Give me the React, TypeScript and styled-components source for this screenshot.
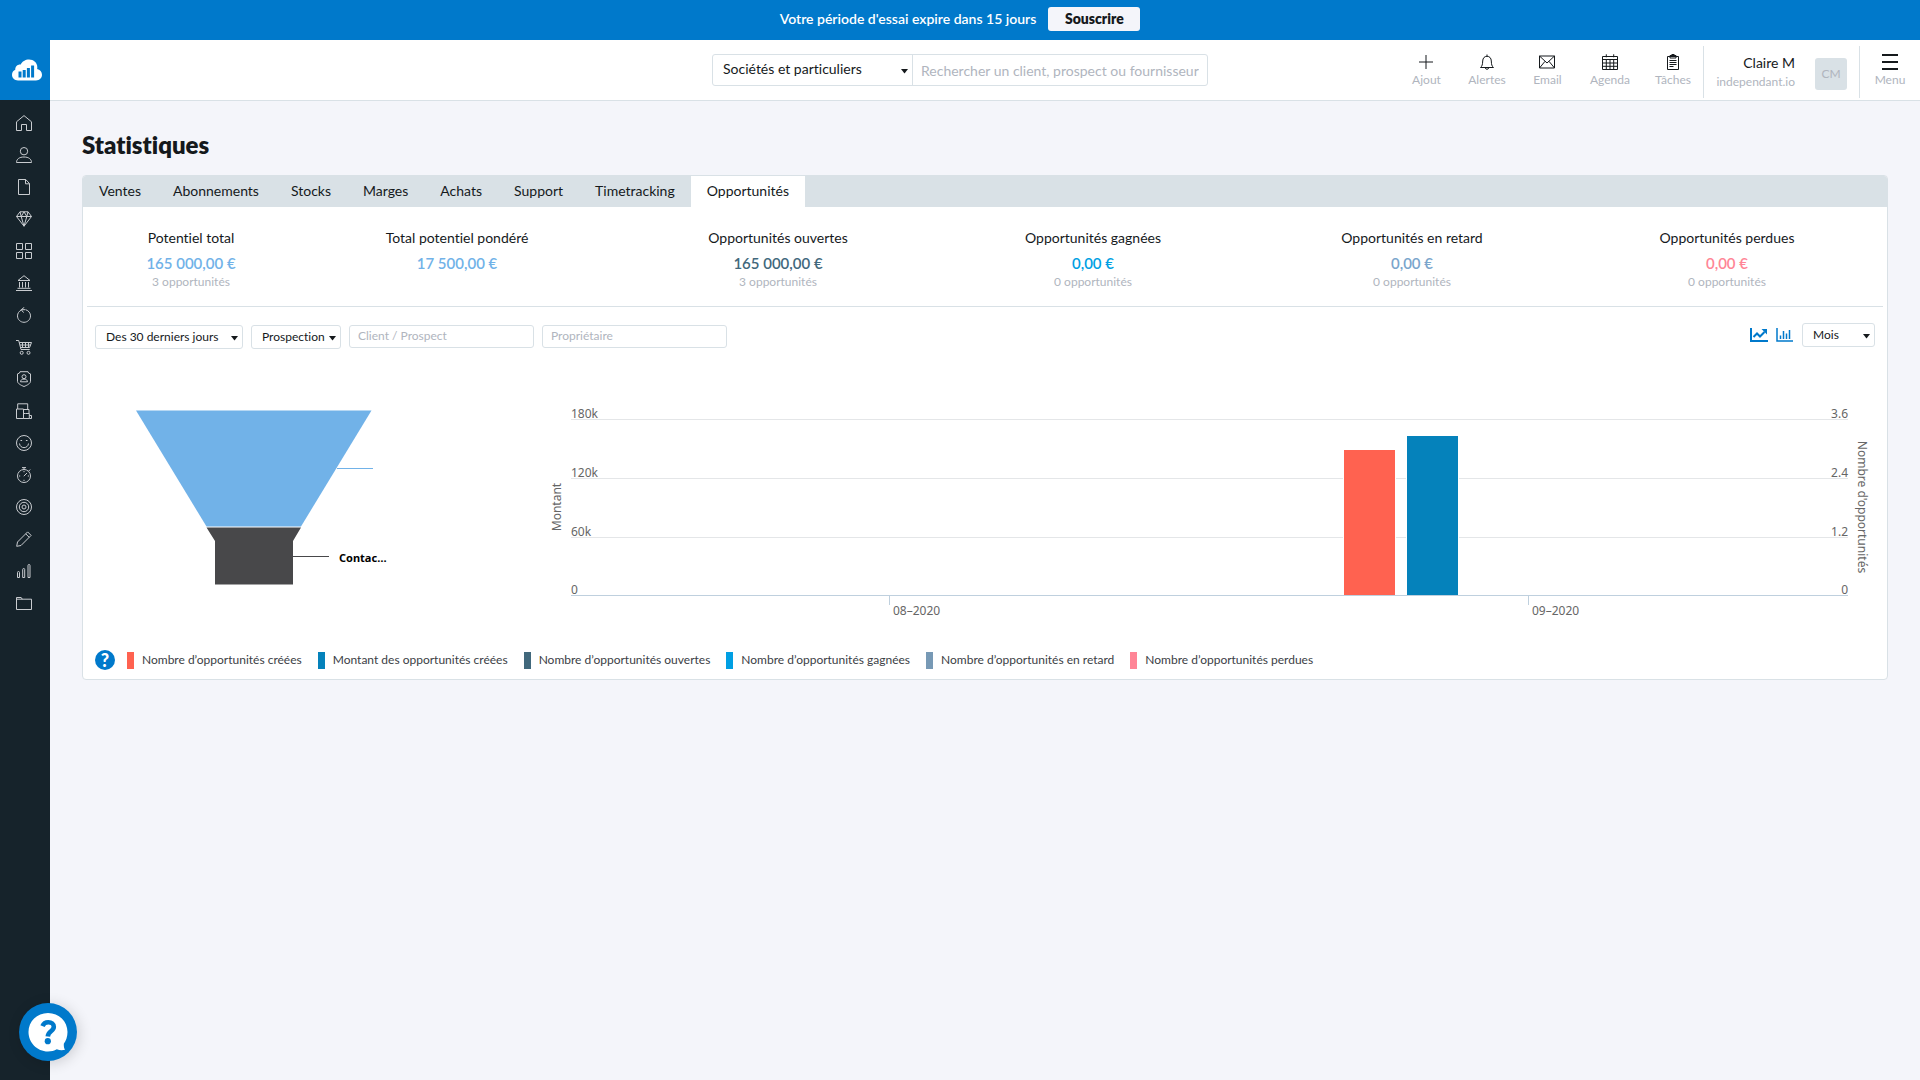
import React from 'react';
import styled, { createGlobalStyle } from 'styled-components';

const color = {
  brand: '#0079cb',
  dark: '#16232b',
  ink: '#15191c',
  line: '#d9e1e6',
  page: '#f4f5fa',
  muted: '#b0b5be',
};

const GlobalStyle = createGlobalStyle`
  * { box-sizing: border-box; }
  body {
    margin: 0;
    background: ${color.page};
    color: ${color.ink};
    font-family: Lato, "Open Sans", sans-serif;
    font-size: 14px;
    font-variant-ligatures: none;
    line-height: 20px;
  }
  button, input, select { font: inherit; color: inherit; margin: 0; }
  a { color: inherit; text-decoration: none; }
`;

const Page = styled.div`
  display: flex;
  flex-direction: column;
  min-height: 100vh;
`;

const TrialBanner = styled.div`
  display: flex;
  align-items: center;
  justify-content: center;
  gap: 12px;
  height: 40px;
  padding-bottom: 2px;
  background: ${color.brand};
  color: #fff;
  font-weight: 600;
`;

const SubscribeButton = styled.button`
  height: 24px;
  width: 92px;
  padding: 0;
  border: 0;
  border-radius: 3px;
  background: ${color.page};
  color: ${color.ink};
  font-weight: 800;
`;

const Body = styled.div`
  display: flex;
  flex: 1;
`;

const Sidebar = styled.nav`
  display: flex;
  flex-direction: column;
  flex: none;
  width: 50px;
  background: ${color.dark};
  color: #c9ccd0;
`;

const LogoLink = styled.a`
  display: flex;
  align-items: center;
  justify-content: center;
  height: 60px;
  padding-left: 4px;
  background: ${color.brand};
`;

const NavList = styled.ul`
  list-style: none;
  margin: 0;
  padding: 7px 0;
`;

const NavLink = styled.a`
  display: flex;
  align-items: center;
  height: 32px;
  padding-left: 16px;
`;

const Icon = styled.svg`
  display: block;
  width: 16px;
  height: 16px;
  fill: none;
  stroke: currentColor;
  stroke-width: 1;
`;

const Main = styled.div`
  flex: 1;
  min-width: 0;
`;

const Header = styled.header`
  display: grid;
  grid-template-columns: 1fr 496px 1fr;
  align-items: center;
  height: 61px;
  background: #fff;
  border-bottom: 1px solid ${color.line};
`;

const SearchGroup = styled.form`
  grid-column: 2;
  display: flex;
  height: 32px;
  margin-left: -25px;
  margin-right: 25px;
  border: 1px solid ${color.line};
  border-radius: 3px;
`;

const SelectWrap = styled.div<{ $width: number }>`
  position: relative;
  flex: none;
  width: ${(p) => p.$width}px;
`;

const Caret = styled.svg<{ $right: number }>`
  position: absolute;
  right: ${(p) => p.$right}px;
  top: calc(50% - 1px);
  width: 7px;
  height: 5px;
  fill: ${color.ink};
  pointer-events: none;
`;

const ScopeSelect = styled.select`
  appearance: none;
  width: 100%;
  height: 30px;
  padding: 0 10px 2px;
  border: 0;
  border-right: 1px solid ${color.line};
  background: transparent;
`;

const SearchInput = styled.input`
  flex: 1;
  min-width: 0;
  padding: 2px 8px 0;
  border: 0;
  background: transparent;
  &::placeholder { color: ${color.muted}; opacity: 1; }
`;

const Tools = styled.div`
  grid-column: 3;
  justify-self: end;
  display: flex;
  align-items: center;
  height: 52px;
  margin-top: 4px;
`;

const ToolLink = styled.a<{ $width: number }>`
  display: flex;
  flex-direction: column;
  align-items: center;
  gap: 2px;
  width: ${(p) => p.$width}px;
  padding-bottom: 2px;
  color: ${color.ink};
  font-size: 12px;
  line-height: 16px;
  span { color: ${color.muted}; }
`;

const Account = styled.a`
  display: flex;
  align-items: center;
  gap: 20px;
  height: 52px;
  padding: 0 12px;
  border: solid ${color.line};
  border-width: 0 1px;
`;

const AccountName = styled.span`
  display: flex;
  flex-direction: column;
  align-items: flex-end;
  line-height: 19px;
  small { font-size: 12px; color: ${color.muted}; }
`;

const Avatar = styled.span`
  display: flex;
  align-items: center;
  justify-content: center;
  width: 32px;
  height: 32px;
  margin-top: 4px;
  border-radius: 3px;
  background: ${color.line};
  color: ${color.muted};
  font-size: 12px;
`;

const Content = styled.main`
  padding: 31px 32px;
`;

const Title = styled.h1`
  margin: 0 0 17px;
  font-size: 24px;
  line-height: 26px;
  font-weight: 800;
`;

const Card = styled.section`
  border: 1px solid ${color.line};
  border-radius: 4px;
  background: #fff;
  overflow: hidden;
`;

const Tabs = styled.nav`
  display: flex;
  height: 31px;
  background: ${color.line};
`;

const Tab = styled.a<{ $active?: boolean }>`
  display: flex;
  align-items: center;
  padding: 0 16px 2px;
  background: ${(p) => (p.$active ? '#fff' : 'transparent')};
`;

const Totals = styled.div`
  display: grid;
  grid-template-columns: 208fr 324fr 318fr 312fr 326fr 304fr;
  margin: 0 4px;
  padding: 21px 4px 14px 0;
  min-height: 100px;
  border-bottom: 1px solid ${color.line};
  text-align: center;
`;

const TotalLabel = styled.div`
  line-height: 20px;
`;

const TotalValue = styled.div<{ $color: string }>`
  margin-top: 3px;
  font-size: 15px;
  font-weight: 600;
  line-height: 24px;
  color: ${(p) => p.$color};
`;

const TotalCount = styled.div`
  font-size: 12px;
  line-height: 14px;
  color: ${color.muted};
`;

const Filters = styled.div`
  display: flex;
  align-items: flex-start;
  justify-content: space-between;
  padding: 16px 12px 0;
  font-size: 12px;
`;

const FilterGroup = styled.div`
  display: flex;
  gap: 8px;
  padding-top: 2px;
`;

const ViewGroup = styled.div`
  display: flex;
  align-items: center;
  gap: 8px;
`;

const FilterSelect = styled.select`
  appearance: none;
  display: block;
  width: 100%;
  height: 24px;
  padding: 0 10px;
  border: 1px solid ${color.line};
  border-radius: 3px;
  background: #fff;
`;

const FilterInput = styled.input`
  width: 185px;
  height: 23px;
  padding: 0 8px 2px;
  border: 1px solid ${color.line};
  border-radius: 3px;
  &::placeholder { color: ${color.muted}; opacity: 1; }
`;

const ModeButton = styled.button`
  display: block;
  padding: 0;
  border: 0;
  background: none;
  color: ${color.brand};
  svg { display: block; }
`;

const Charts = styled.div`
  display: grid;
  grid-template-columns: 440px 1fr;
  padding: 35px 12px 0;
`;

const ChartSvg = styled.svg`
  display: block;
  width: 100%;
  height: auto;
  text { font-family: "Noto Sans", sans-serif; font-size: 12px; fill: #666; }
`;

const SliceLabel = styled.text`
  && { font-size: 11px; font-weight: 700; fill: #000; }
`;

const Legend = styled.div`
  display: flex;
  align-items: center;
  gap: 12px;
  padding: 26px 12px 9px;
`;

const LegendList = styled.ul`
  display: flex;
  gap: 16px;
  margin: 0;
  padding: 0;
  list-style: none;
`;

const LegendItem = styled.li<{ $color: string }>`
  display: flex;
  align-items: center;
  gap: 8px;
  font-size: 12px;
  line-height: 20px;
  color: #3b4045;
  &::before {
    content: "";
    width: 7px;
    height: 17px;
    background: ${(p) => p.$color};
  }
`;

const HelpBadge = styled.span`
  display: flex;
  align-items: center;
  justify-content: center;
  width: 20px;
  height: 20px;
  border-radius: 50%;
  background: ${color.brand};
  color: #fff;
  font-size: 18px;
  font-weight: 900;
`;

const ChatButton = styled.button`
  position: fixed;
  left: 19px;
  bottom: 19px;
  width: 58px;
  height: 58px;
  padding: 0;
  border: 0;
  border-radius: 50%;
  background: ${color.brand};
  box-shadow: 2px 2px 14px rgba(0, 0, 0, 0.16);
  svg { display: block; }
`;

const navItems: [string, React.ReactNode][] = [
  ['Accueil', <path d="M.5 6.8v8.7h5v-6h5v6h5V6.8L8 .6z" />],
  ['Clients', <><circle cx="8" cy="4.2" r="3.7" /><path d="M.5 15.5c0-3.4 2.8-5.5 7.5-5.5s7.5 2.1 7.5 5.5z" /></>],
  ['Documents', <path d="M2.5.5h7.2l3.8 4v11h-11zM9.5.5v4.3h4" />],
  ['Catalogue', <path d="M4 .8h8l3.5 4.7L8 15.2.5 5.5zM.5 5.5h15M4 .8l1.2 4.7L8 15.2l2.8-9.7L12 .8M5.2 5.5 8 .8l2.8 4.7" />],
  ['Modules', <path d="M.5.5h6v6h-6zM9.5.5h6v6h-6zM.5 9.5h6v6h-6zM9.5 9.5h6v6h-6z" />],
  ['Banque', <path d="M2 5.5h12L8 .7zM3.5 7v5.5M6.5 7v5.5M9.5 7v5.5M12.5 7v5.5M1.5 13.3h13M0 15.5h16" />],
  ['Abonnements', <path d="M5.200 3.200C3 4.200 1.500 6.300 1.500 8.900c0 3.500 2.900 6.400 6.500 6.400s6.500-2.900 6.500-6.400c0-2.900-1.900-5.200-4.600-6.100M9.500 2.700H5.200M8.300.3 5.200 2.700l2.400 2.900" />],
  ['Achats', <><path d="M0 1.500h2.700l2.300 9h8.700M3.300 3.500h12.200l-1.900 5H4.600M4 6h10.700M6.500 3.500v5M9.500 3.500v5M12.500 3.500v5" /><circle cx="5.700" cy="13.800" r="1.500" /><circle cx="12.500" cy="13.800" r="1.500" /></>],
  ['Comptabilité', <><path d="m4 .7h8l.6 1.400 1.900.8v7.400c0 2.200-3.500 4-6.500 5.200-3-1.200-6.500-3-6.500-5.200V2.900l1.900-.8z" /><circle cx="8" cy="5.700" r="2" /><path d="M4.500 10.800c.3-1.900 1.300-2.700 3.500-2.700s3.200.8 3.500 2.700z" /></>],
  ['Stocks', <path d="M.5 6h7v9.500h-7zM1.700 6V.8h10v5.700M7.500 6.500h5.500v4M9.500 10.500h3.800v5H7.500v-5zM13.300 12.500h2.200v3h-2.200" />],
  ['Satisfaction', <><circle cx="8" cy="8" r="7.500" /><path d="M3.500 8.500c.4 5.500 8.600 5.500 9 0M4.500 5.500h1.600M9.900 5.500h1.600" /></>],
  ['Temps', <><circle cx="8" cy="9" r="6.500" /><path d="M6 .6h4M8 .6v2M12.600 4.200l1.600-1.700M7.800 9.200 11 6M8 4v1.200M8 12.800V14M3 9h1.200M11.800 9H13" /></>],
  ['Objectifs', <><circle cx="8" cy="8" r="7.500" /><circle cx="8" cy="8" r="4.700" /><circle cx="8" cy="8" r="2" /></>],
  ['Édition', <path d="M.7 15.300 1.500 11 11.600.9l3.500 3.500L5 14.500zM9.700 2.800l3.500 3.500" />],
  ['Statistiques', <path d="M1.500 9.500q0-1 1-1t1 1v5h-2zM6.700 6.500q0-1 1-1t1 1v8h-2zM12 2.500q0-1 1-1t1 1v12h-2z" />],
  ['Fichiers', <path d="M.5 14.500v-12h4.700l1 1.700h9.300v10.300zM.5 4.200h6" />],
];

const tools: [string, number, React.ReactNode][] = [
  ['Ajout', 60, <path d="M8 1v14M1 8h14" />],
  ['Alertes', 61, <path d="M1.500 13.500c1.800-1.500 2-3 2.200-6.500.1-3 1.800-4.700 4.300-4.700S12.200 4 12.300 7c.2 3.500.4 5 2.200 6.500zM8 2.300V.5M6.300 14c.4 1.700 3 1.700 3.400 0" />],
  ['Email', 60, <path d="M.5 2h15v12h-15zM.5 2 8 9l7.500-7M.5 14l5.500-6.700M15.500 14 10 7.300" />],
  ['Agenda', 65, <path d="M.5 2.500h15v13H.5zM.5 5.500h15M.5 9h15M.5 12.300h15M4.300 5.500v10M8 5.500v10M11.700 5.500v10M4.300.3v3M11.700.3v3" />],
  ['Tâches', 61, <path d="M2.500 2.500h11v13h-11zM5 1.500h6v2.500H5zM6.500.5h3M4.500 6.500h7M4.500 8.500h7M4.500 10.500h7M4.500 12.500h4" />],
];

const tabs = ['Ventes', 'Abonnements', 'Stocks', 'Marges', 'Achats', 'Support', 'Timetracking', 'Opportunités'];

const totals = [
  { label: 'Potentiel total', value: '165 000,00 €', count: '3 opportunités', color: '#71b2e8' },
  { label: 'Total potentiel pondéré', value: '17 500,00 €', count: '', color: '#71b2e8' },
  { label: 'Opportunités ouvertes', value: '165 000,00 €', count: '3 opportunités', color: '#41687c' },
  { label: 'Opportunités gagnées', value: '0,00 €', count: '0 opportunités', color: '#009fe3' },
  { label: 'Opportunités en retard', value: '0,00 €', count: '0 opportunités', color: '#7aa5cc' },
  { label: 'Opportunités perdues', value: '0,00 €', count: '0 opportunités', color: '#ff8596' },
];

const legend = [
  ['Nombre d’opportunités créées', '#ff6250'],
  ['Montant des opportunités créées', '#0582bb'],
  ['Nombre d’opportunités ouvertes', '#41687c'],
  ['Nombre d’opportunités gagnées', '#009fe3'],
  ['Nombre d’opportunités en retard', '#7799b5'],
  ['Nombre d’opportunités perdues', '#ff8596'],
];

function CaretDown({ right }: { right: number }) {
  return <Caret $right={right} viewBox="0 0 7 5" aria-hidden="true"><path d="M0 0h7L3.500 4.500z" /></Caret>;
}

function Funnel() {
  return (
    <ChartSvg viewBox="0 0 440 240" role="img" aria-label="Entonnoir de prospection">
      <path d="M41 26.500H276.500L206 142.500H111.500z" fill="#71b2e8" />
      <path d="M111.500 143.500H206l-8 13.500v43.500h-78V157z" fill="#48484a" />
      <path d="M242 84.500h36" stroke="#71b2e8" />
      <path d="M198 172.500h36" stroke="#48484a" />
      <SliceLabel x="244" y="178">Contac…</SliceLabel>
    </ChartSvg>
  );
}

const gridRows = [
  { y: 35, left: '180k', right: '3.6' },
  { y: 94, left: '120k', right: '2.4' },
  { y: 153, left: '60k', right: '1.2' },
  { y: 211, left: '0', right: '0' },
];

function Bars() {
  return (
    <ChartSvg viewBox="0 0 1340 240" role="img" aria-label="Opportunités par mois">
      {gridRows.slice(0, 3).map((r) => (
        <path key={r.y} d={`M36 ${r.y + 0.5}H1313`} stroke="#e4e6e8" />
      ))}
      <rect x="808" y="65" width="53" height="147" fill="#fff" />
      <rect x="871" y="51" width="53" height="161" fill="#fff" />
      <rect x="809" y="66" width="51" height="146" fill="#ff6250" />
      <rect x="872" y="52" width="51" height="160" fill="#0582bb" />
      <path d="M36 211.500H1313M354.500 212v9M993.500 212v9" stroke="#bfd0de" />
      {gridRows.map((r) => (
        <React.Fragment key={r.y}>
          <text x="36" y={r.y - 1}>{r.left}</text>
          <text x="1313" y={r.y - 1} textAnchor="end">{r.right}</text>
        </React.Fragment>
      ))}
      <text x="358" y="231">08–2020</text>
      <text x="997" y="231">09–2020</text>
      <text transform="translate(26 123) rotate(-90)" textAnchor="middle">Montant</text>
      <text transform="translate(1323 123) rotate(90)" textAnchor="middle">Nombre d'opportunités</text>
    </ChartSvg>
  );
}

export default function App() {
  return (
    <Page>
      <GlobalStyle />
      <TrialBanner>
        <span>Votre période d'essai expire dans 15 jours</span>
        <SubscribeButton type="button">Souscrire</SubscribeButton>
      </TrialBanner>
      <Body>
        <Sidebar aria-label="Navigation principale">
          <LogoLink href="#" aria-label="Tableau de bord">
            <svg width="30" height="22" viewBox="0 0 30 22">
              <path d="M6 21.500C2.500 21.500 0 19 0 15.800c0-2.500 1.500-4.300 3.300-5-.3-3.300 2.300-5.600 5.400-5.300C10 2.500 13.500.5 17 .5c4.700 0 8.300 3.300 8.300 7.700 0 .7 0 1.300-.2 1.900 2.900.6 4.900 2.900 4.900 5.700 0 3.200-2.500 5.700-6 5.700z" fill="#fff" />
              <path d="M6.500 12.500h3V18.500h-3zM10.700 11h3v7.500h-3zM14.900 9h3v9.500h-3zM19.100 6.500h3v12h-3z" fill={color.brand} />
            </svg>
          </LogoLink>
          <NavList>
            {navItems.map(([name, shape]) => (
              <li key={name}>
                <NavLink href="#" aria-label={name}><Icon viewBox="0 0 16 16">{shape}</Icon></NavLink>
              </li>
            ))}
          </NavList>
        </Sidebar>
        <Main>
          <Header>
            <SearchGroup onSubmit={(e) => e.preventDefault()}>
              <SelectWrap $width={200}>
                <ScopeSelect aria-label="Type de client"><option>Sociétés et particuliers</option></ScopeSelect>
                <CaretDown right={5} />
              </SelectWrap>
              <SearchInput aria-label="Recherche" placeholder="Rechercher un client, prospect ou fournisseur" />
            </SearchGroup>
            <Tools>
              {tools.map(([name, width, shape]) => (
                <ToolLink key={name} href="#" $width={width}>
                  <Icon viewBox="0 0 16 16">{shape}</Icon>
                  <span>{name}</span>
                </ToolLink>
              ))}
              <Account href="#">
                <AccountName>Claire M<small>independant.io</small></AccountName>
                <Avatar>CM</Avatar>
              </Account>
              <ToolLink href="#" $width={60}>
                <Icon viewBox="0 0 16 16"><path d="M0 1h16M0 8h16M0 15h16" strokeWidth="2" /></Icon>
                <span>Menu</span>
              </ToolLink>
            </Tools>
          </Header>
          <Content>
            <Title>Statistiques</Title>
            <Card>
              <Tabs aria-label="Statistiques">
                {tabs.map((t) => <Tab key={t} href="#" $active={t === 'Opportunités'}>{t}</Tab>)}
              </Tabs>
              <Totals>
                {totals.map((t) => (
                  <div key={t.label}>
                    <TotalLabel>{t.label}</TotalLabel>
                    <TotalValue $color={t.color}>{t.value}</TotalValue>
                    <TotalCount>{t.count}</TotalCount>
                  </div>
                ))}
              </Totals>
              <Filters>
                <FilterGroup>
                  <SelectWrap $width={148}>
                    <FilterSelect aria-label="Période"><option>Des 30 derniers jours</option></FilterSelect>
                    <CaretDown right={5} />
                  </SelectWrap>
                  <SelectWrap $width={90}>
                    <FilterSelect aria-label="Pipeline"><option>Prospection</option></FilterSelect>
                    <CaretDown right={5} />
                  </SelectWrap>
                  <FilterInput aria-label="Client ou prospect" placeholder="Client / Prospect" />
                  <FilterInput aria-label="Propriétaire" placeholder="Propriétaire" />
                </FilterGroup>
                <ViewGroup>
                  <ModeButton type="button" aria-label="Courbe">
                    <svg width="18" height="14" viewBox="0 0 18 14" fill="none" stroke="currentColor" strokeWidth="2">
                      <path d="M1 0v13h17M3.500 9 7 5.500 10 8.500l4.500-4.500" /><path d="M11.500 1H17v5.500z" fill="currentColor" stroke="none" />
                    </svg>
                  </ModeButton>
                  <ModeButton type="button" aria-label="Histogramme">
                    <svg width="18" height="14" viewBox="0 0 18 14" fill="none" stroke="currentColor">
                      <path d="M1 0v13h16M4.500 11V7.500M7.500 11V3M10.500 11V5.500M13.500 11V2" strokeWidth="1.500" />
                    </svg>
                  </ModeButton>
                  <SelectWrap $width={73}>
                    <FilterSelect aria-label="Regroupement"><option>Mois</option></FilterSelect>
                    <CaretDown right={5} />
                  </SelectWrap>
                </ViewGroup>
              </Filters>
              <Charts>
                <Funnel />
                <Bars />
              </Charts>
              <Legend>
                <HelpBadge>?</HelpBadge>
                <LegendList>
                  {legend.map(([label, c]) => <LegendItem key={label} $color={c}>{label}</LegendItem>)}
                </LegendList>
              </Legend>
            </Card>
          </Content>
        </Main>
      </Body>
      <ChatButton type="button" aria-label="Aide">
        <svg width="58" height="58" viewBox="0 0 58 58">
          <path d="M29 10C18 10 9.500 18.500 9.500 29S18 48.500 29 48.500c3.300 0 6.300-.8 8.800-2.200 2.500 1 5.300 1.300 8.200.5-1-1.500-1.300-3.300-1.200-6 2.300-3.200 3.700-7.200 3.700-11.800C48.500 18.500 40 10 29 10z" fill="#fff" />
          <path d="M23.500 23.200c1-2.500 3-3.900 5.800-3.900 3.300 0 5.500 1.900 5.500 4.500 0 4.600-5.700 4.400-6 9.700" fill="none" stroke={color.brand} strokeWidth="4.600" />
          <circle cx="28.800" cy="38.200" r="3.100" fill={color.brand} />
        </svg>
      </ChatButton>
    </Page>
  );
}
